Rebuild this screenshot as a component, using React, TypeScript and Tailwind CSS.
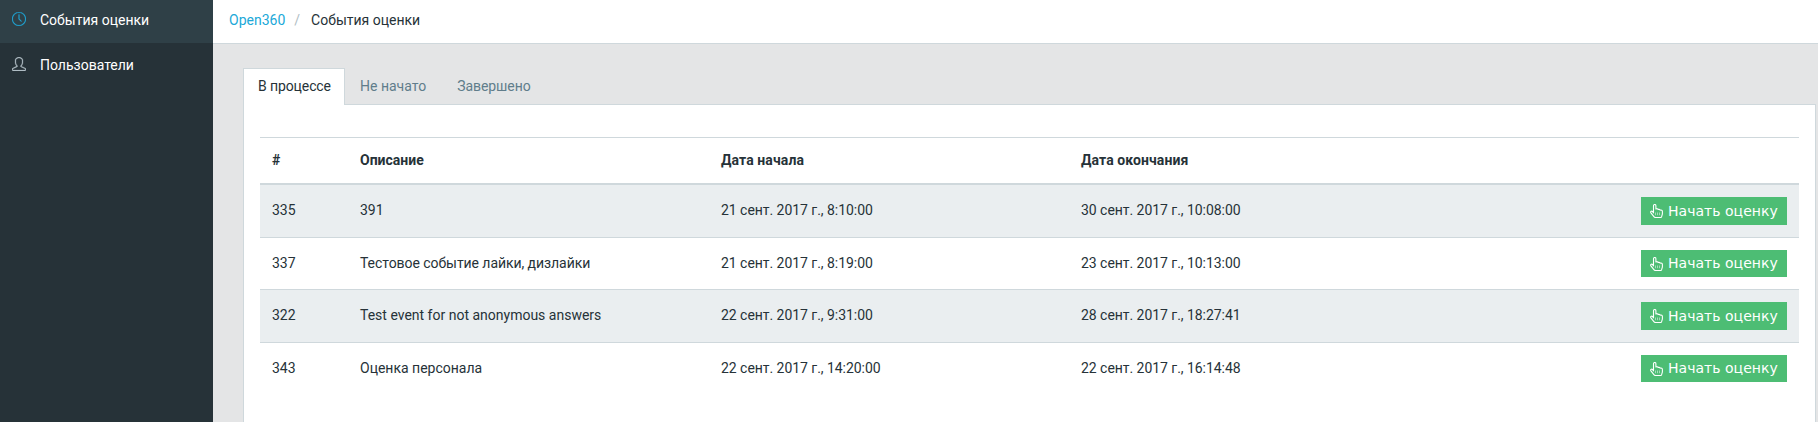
import { SlClock, SlUser } from "react-icons/sl";

const rows = [
  { id: "335", name: "391", start: "21 сент. 2017 г., 8:10:00", end: "30 сент. 2017 г., 10:08:00", height: "h-[52px]", button: "h-7" },
  { id: "337", name: "Тестовое событие лайки, дизлайки", start: "21 сент. 2017 г., 8:19:00", end: "23 сент. 2017 г., 10:13:00", height: "h-[52px]", button: "h-[27px]" },
  { id: "322", name: "Test event for not anonymous answers", start: "22 сент. 2017 г., 9:31:00", end: "28 сент. 2017 г., 18:27:41", height: "h-[53px]", button: "h-7" },
  { id: "343", name: "Оценка персонала", start: "22 сент. 2017 г., 14:20:00", end: "22 сент. 2017 г., 16:14:48", height: "h-[53px]", button: "h-[27px]" },
];

const columns = "grid grid-cols-[88px_361px_360px_1fr_170px]";

function Sidebar() {
  return (
    <nav className="w-[213px] shrink-0 bg-[#263238] text-white">
      <a className="flex h-[43px] items-center bg-[#2f4047] pb-[3px] pl-3">
        <SlClock className="mr-[14px] mb-[2px] size-[14px] stroke-[#20a8d8] stroke-[16] text-[#20a8d8]" />
        События оценки
      </a>
      <a className="flex h-[44px] items-center pl-3">
        <SlUser className="mr-[14px] mb-[2px] size-[14px] stroke-[#b0bec5] stroke-[20] text-[#b0bec5]" />
        Пользователи
      </a>
    </nav>
  );
}

function HandIcon() {
  return (
    <svg className="mr-[5px] h-[14px] w-[13px] shrink-0" viewBox="0 0 13 14" fill="none" stroke="currentColor">
      <path
        d="M3.5 8.8V1.7a1.2 1.2 0 0 1 2.4 0V5c1-.5 1.9-.2 2.2.5.9-.3 1.7 0 2 .6 1.300-.3 2.300.3 2.300 1.500v2c0 1.300-.6 1.900-.8 3.100-.1.5-.4.8-.9.8H5.500c-.7 0-1-.2-1.400-.7L.9 8.800C.1 7.600 1.500 6.500 2.500 7.500z"
        strokeWidth="1.1"
        strokeLinejoin="round"
      />
      <path d="M5.500 8.500v2.700M7.500 8.500v2.700M9.500 8.500v2.700" strokeWidth="0.7" opacity="0.7" />
    </svg>
  );
}

function StartButton({ height }: { height: string }) {
  return (
    <button className={`flex w-[146px] items-center bg-[#4dbd74] pl-[9px] font-['DejaVu_Sans'] text-[14px] tracking-[0.03px] text-white ${height}`}>
      <HandIcon />
      <span className="whitespace-nowrap">Начать оценку</span>
    </button>
  );
}

export default function App() {
  return (
    <div className="flex h-[422px] w-[1818px] overflow-hidden bg-[#e4e5e6] font-['Roboto',sans-serif] text-[14px] leading-[21px] text-[#263238]">
      <Sidebar />
      <main className="flex min-w-0 flex-1 flex-col">
        <header className="flex h-11 shrink-0 items-center border-b border-[#cfd8dc] bg-white pb-[3px] pl-4">
          <a className="text-[#20a8d8]">Open360</a>
          <span className="ml-[9px] mr-[11px] text-[#b0bec5]">/</span>
          <span>События оценки</span>
        </header>
        <div className="flex flex-1 flex-col pl-[30px] pr-[2px] pt-6">
          <div className="z-10 -mb-px flex h-[37px]">
            <div className="flex w-[102px] items-center border border-b-0 border-[#cfd8dc] bg-white pb-[2px] pl-[14px] tracking-[-0.1px]">В процессе</div>
            <div className="flex items-center pl-[15px] text-[#607d8b]">Не начато</div>
            <div className="flex items-center pl-[31px] tracking-[-0.05px] text-[#607d8b]">Завершено</div>
          </div>
          <section className="flex-1 border border-b-0 border-[#cfd8dc] bg-white px-4 pt-8">
            <div className={`${columns} h-12 items-center border-b-2 border-t border-[#cfd8dc] font-bold`}>
              <span className="pl-3">#</span>
              <span className="pl-3">Описание</span>
              <span className="pl-3 tracking-[0.1px]">Дата начала</span>
              <span className="pl-3 tracking-[0.1px]">Дата окончания</span>
            </div>
            {rows.map((row, i) => (
              <div
                key={row.id}
                className={`${columns} items-start pt-3 ${row.height} ${i > 0 ? "border-t border-[#cfd8dc]" : ""} ${i % 2 === 0 ? "bg-[#eaeef0]" : ""}`}
              >
                <span className="pl-3 pt-[3px]">{row.id}</span>
                <span className={`pl-3 pt-[3px] ${i === 1 ? "tracking-[-0.06px]" : ""}`}>{row.name}</span>
                <span className="pl-3 pt-[3px] tracking-[-0.04px]">{row.start}</span>
                <span className="pl-3 pt-[3px] tracking-[-0.04px]">{row.end}</span>
                <div className="flex justify-end pr-3">
                  <StartButton height={row.button} />
                </div>
              </div>
            ))}
          </section>
        </div>
      </main>
    </div>
  );
}
